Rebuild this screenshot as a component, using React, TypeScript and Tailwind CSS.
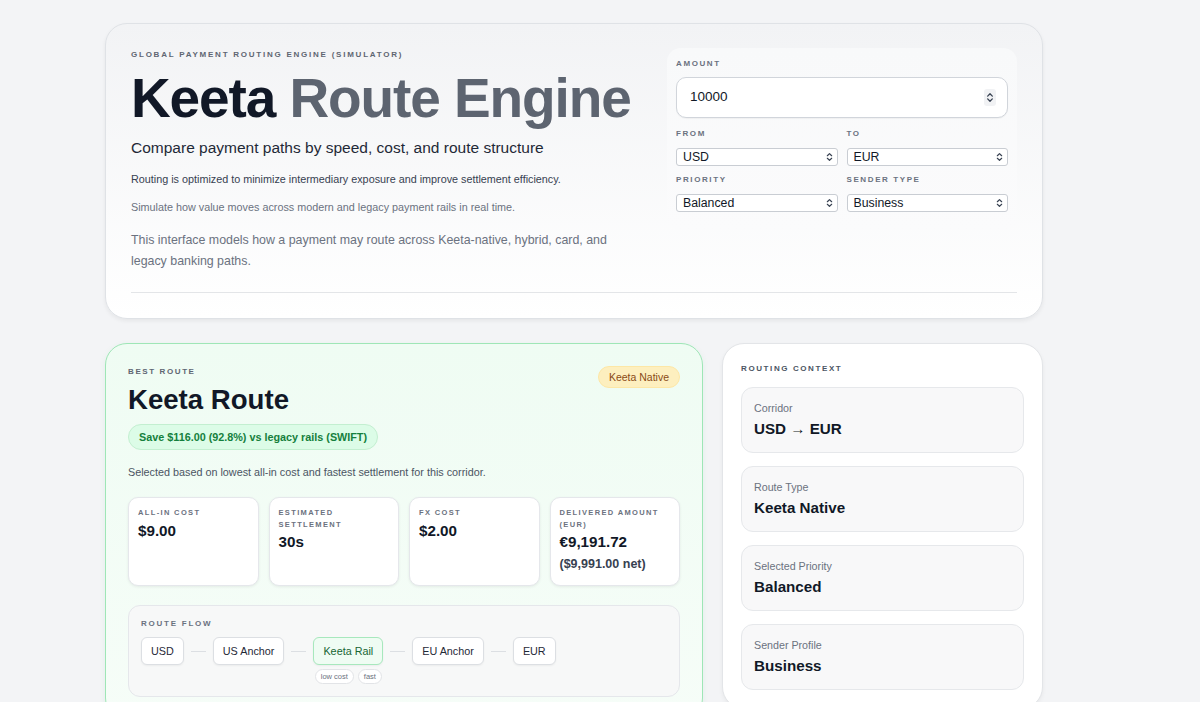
import React from 'react';

const UpDown = ({ className = '' }: { className?: string }) => (
  <svg viewBox="0 0 10 14" className={className} fill="none" stroke="#374151" strokeWidth="1.4" strokeLinecap="round" strokeLinejoin="round">
    <path d="M2.5 5.5 L5 3 L7.5 5.5" />
    <path d="M2.5 8.5 L5 11 L7.5 8.5" />
  </svg>
);

const FakeSelect = ({ value }: { value: string }) => (
  <div className="flex h-[18px] items-center justify-between rounded-[3px] border border-[#c9cdd3] bg-white pl-[6px] pr-[3px] text-[12.3px] leading-none text-[#111827]">
    <span>{value}</span>
    <UpDown className="h-[12px] w-[9px]" />
  </div>
);

const FieldLabel = ({ children }: { children: React.ReactNode }) => (
  <div className="text-[8px] font-bold uppercase leading-[12px] tracking-[0.2em] text-[#6b7280]">{children}</div>
);

const metrics = [
  { label: 'All-in cost', value: '$9.00' },
  { label: 'Estimated settlement', value: '30s' },
  { label: 'FX cost', value: '$2.00' },
  { label: 'Delivered amount (EUR)', value: '€9,191.72', sub: '($9,991.00 net)' },
];

const flowNodes = [
  { name: 'USD' },
  { name: 'US Anchor' },
  { name: 'Keeta Rail', active: true, tags: ['low cost', 'fast'] },
  { name: 'EU Anchor' },
  { name: 'EUR' },
];

const context = [
  { label: 'Corridor', value: 'USD → EUR' },
  { label: 'Route Type', value: 'Keeta Native' },
  { label: 'Selected Priority', value: 'Balanced' },
  { label: 'Sender Profile', value: 'Business' },
];

export default function App() {
  return (
    <div className="min-h-[702px] overflow-hidden bg-[#f3f4f6] pt-[23px] font-['Liberation_Sans',Arial,sans-serif] text-[#111827]">
      <div className="ml-[105px] w-[938px]">
        {/* Header */}
        <section className="rounded-[22px] border border-[#dfe2e6] bg-gradient-to-b from-[#f2f3f5] to-white px-[25px] pb-[25px] pt-[24px] shadow-[0_2px_4px_rgba(0,0,0,0.06)]">
          <div className="flex items-start justify-between">
            <div className="w-[500px] pt-[1px]">
              <div className="whitespace-nowrap text-[8px] font-bold uppercase leading-[12px] tracking-[0.22em] text-[#5f6672]">
                Global Payment Routing Engine (Simulator)
              </div>
              <h1 className="mt-[10px] whitespace-nowrap text-[55px] font-bold leading-[55px] tracking-[-0.02em]">
                <span className="text-[#111827]">Keeta</span> <span className="text-[#5d6470]">Route Engine</span>
              </h1>
              <p className="mt-[10px] whitespace-nowrap text-[15.5px] leading-[24px] text-[#1f2937]">
                Compare payment paths by speed, cost, and route structure
              </p>
              <p className="mt-[11px] whitespace-nowrap text-[10.8px] leading-[16px] text-[#374151]">
                Routing is optimized to minimize intermediary exposure and improve settlement efficiency.
              </p>
              <p className="mt-[12px] whitespace-nowrap text-[10.8px] leading-[16px] text-[#6b7280]">
                Simulate how value moves across modern and legacy payment rails in real time.
              </p>
              <p className="mt-[15px] w-[485px] text-[12.4px] leading-[20.5px] text-[#6b7280]">
                This interface models how a payment may route across Keeta-native, hybrid, card, and legacy banking paths.
              </p>
            </div>

            <div className="w-[350px] rounded-[14px] bg-gradient-to-b from-[#f8f9fa] to-[#fbfbfc] px-[9px] pb-[18px] pt-[10px]">
              <FieldLabel>Amount</FieldLabel>
              <div className="mt-[7px] flex h-[41px] items-center justify-between rounded-[10px] border border-[#d1d5db] bg-white pl-[13px] pr-[11px] shadow-[0_1px_1px_rgba(0,0,0,0.04)]">
                <span className="text-[13.5px] text-[#111827]">10000</span>
                <span className="flex h-[17px] w-[12px] items-center justify-center rounded-[3px] bg-[#f1f2f4]">
                  <UpDown className="h-[13px] w-[10px]" />
                </span>
              </div>
              <div className="mt-[10px] grid grid-cols-2 gap-x-[9px]">
                <div>
                  <FieldLabel>From</FieldLabel>
                  <div className="mt-[8px]">
                    <FakeSelect value="USD" />
                  </div>
                </div>
                <div>
                  <FieldLabel>To</FieldLabel>
                  <div className="mt-[8px]">
                    <FakeSelect value="EUR" />
                  </div>
                </div>
                <div className="mt-[8px]">
                  <FieldLabel>Priority</FieldLabel>
                  <div className="mt-[8px]">
                    <FakeSelect value="Balanced" />
                  </div>
                </div>
                <div className="mt-[8px]">
                  <FieldLabel>Sender Type</FieldLabel>
                  <div className="mt-[8px]">
                    <FakeSelect value="Business" />
                  </div>
                </div>
              </div>
            </div>
          </div>
          <div className="mt-[21px] h-px bg-[#e3e5e8]" />
        </section>

        {/* Lower row */}
        <div className="mt-[24px] flex items-start gap-[19px]">
          <section className="w-[598px] rounded-[22px] border border-[#9ee6b6] bg-gradient-to-b from-[#effcf3] to-[#f6fdf8] px-[22px] pb-[22px] pt-[22px] shadow-[0_2px_6px_rgba(34,197,94,0.08)]">
            <div className="flex items-start justify-between">
              <div>
                <div className="text-[8px] font-bold uppercase leading-[12px] tracking-[0.2em] text-[#5f6672]">Best Route</div>
                <h2 className="mt-[5px] text-[27.6px] font-bold leading-[34px] text-[#111827]">Keeta Route</h2>
              </div>
              <span className="rounded-full border border-[#fde7a6] bg-[#fdefbf] px-[10px] py-[4px] text-[10.5px] leading-[12px] text-[#8a4a16]">
                Keeta Native
              </span>
            </div>
            <div className="mt-[7px] inline-block rounded-full border border-[#c3efd0] bg-[#dcfce7] px-[10px] py-[6px] text-[10.8px] font-bold leading-[12px] text-[#15803d]">
              Save $116.00 (92.8%) vs legacy rails (SWIFT)
            </div>
            <p className="mt-[14px] text-[10.8px] leading-[16px] text-[#4b5563]">
              Selected based on lowest all-in cost and fastest settlement for this corridor.
            </p>

            <div className="mt-[17px] grid grid-cols-4 gap-[10px]">
              {metrics.map((m) => (
                <div
                  key={m.label}
                  className="h-[89px] rounded-[10px] border border-[#e5e7eb] bg-white px-[9px] pt-[9px] shadow-[0_1px_3px_rgba(0,0,0,0.07)]"
                >
                  <div className="text-[7.5px] font-bold uppercase leading-[11.5px] tracking-[0.18em] text-[#6b7280]">{m.label}</div>
                  <div className="mt-[2px] text-[15.2px] font-bold leading-[20px] text-[#111827]">{m.value}</div>
                  {m.sub && <div className="mt-[3px] text-[12.5px] font-semibold leading-[18px] text-[#374151]">{m.sub}</div>}
                </div>
              ))}
            </div>

            <div className="mt-[19px] rounded-[12px] border border-[#e5e7eb] bg-[#f7f8f8] px-[12px] pb-[12px] pt-[12px]">
              <div className="text-[8px] font-bold uppercase leading-[12px] tracking-[0.22em] text-[#6b7280]">Route Flow</div>
              <div className="mt-[7px] flex items-start">
                {flowNodes.map((n, i) => (
                  <React.Fragment key={n.name}>
                    {i > 0 && <div className="mx-[7px] mt-[14px] h-px w-[15px] bg-[#dcdfe3]" />}
                    <div className="flex flex-col items-center">
                      <div
                        className={
                          n.active
                            ? 'flex h-[28px] items-center rounded-[6px] border border-[#a7e8bd] bg-[#effcf3] px-[9px] text-[10.8px] text-[#166534] shadow-[0_1px_2px_rgba(0,0,0,0.05)]'
                            : 'flex h-[28px] items-center rounded-[6px] border border-[#dcdfe3] bg-white px-[9px] text-[10.8px] text-[#1f2937] shadow-[0_1px_2px_rgba(0,0,0,0.05)]'
                        }
                      >
                        {n.name}
                      </div>
                      {n.tags && (
                        <div className="mt-[4px] flex gap-[4px]">
                          {n.tags.map((t) => (
                            <span
                              key={t}
                              className="rounded-full border border-[#e2e4e7] bg-white px-[5px] py-[2px] text-[7.5px] leading-[9px] text-[#6b7280]"
                            >
                              {t}
                            </span>
                          ))}
                        </div>
                      )}
                    </div>
                  </React.Fragment>
                ))}
              </div>
            </div>
          </section>

          <section className="w-[321px] rounded-[22px] border border-[#e3e5e8] bg-white px-[18px] pb-[18px] pt-[19px] shadow-[0_2px_4px_rgba(0,0,0,0.05)]">
            <div className="text-[8px] font-bold uppercase leading-[12px] tracking-[0.2em] text-[#4b5563]">Routing Context</div>
            <div className="mt-[12px] flex flex-col gap-[13px]">
              {context.map((c) => (
                <div key={c.label} className="h-[66px] rounded-[12px] border border-[#e6e8eb] bg-[#f8f8f9] px-[12px] pt-[12px]">
                  <div className="text-[10.7px] leading-[16px] text-[#6b7280]">{c.label}</div>
                  <div className="mt-[3px] text-[15.2px] font-bold leading-[20px] text-[#111827]">{c.value}</div>
                </div>
              ))}
            </div>
          </section>
        </div>
      </div>
    </div>
  );
}
